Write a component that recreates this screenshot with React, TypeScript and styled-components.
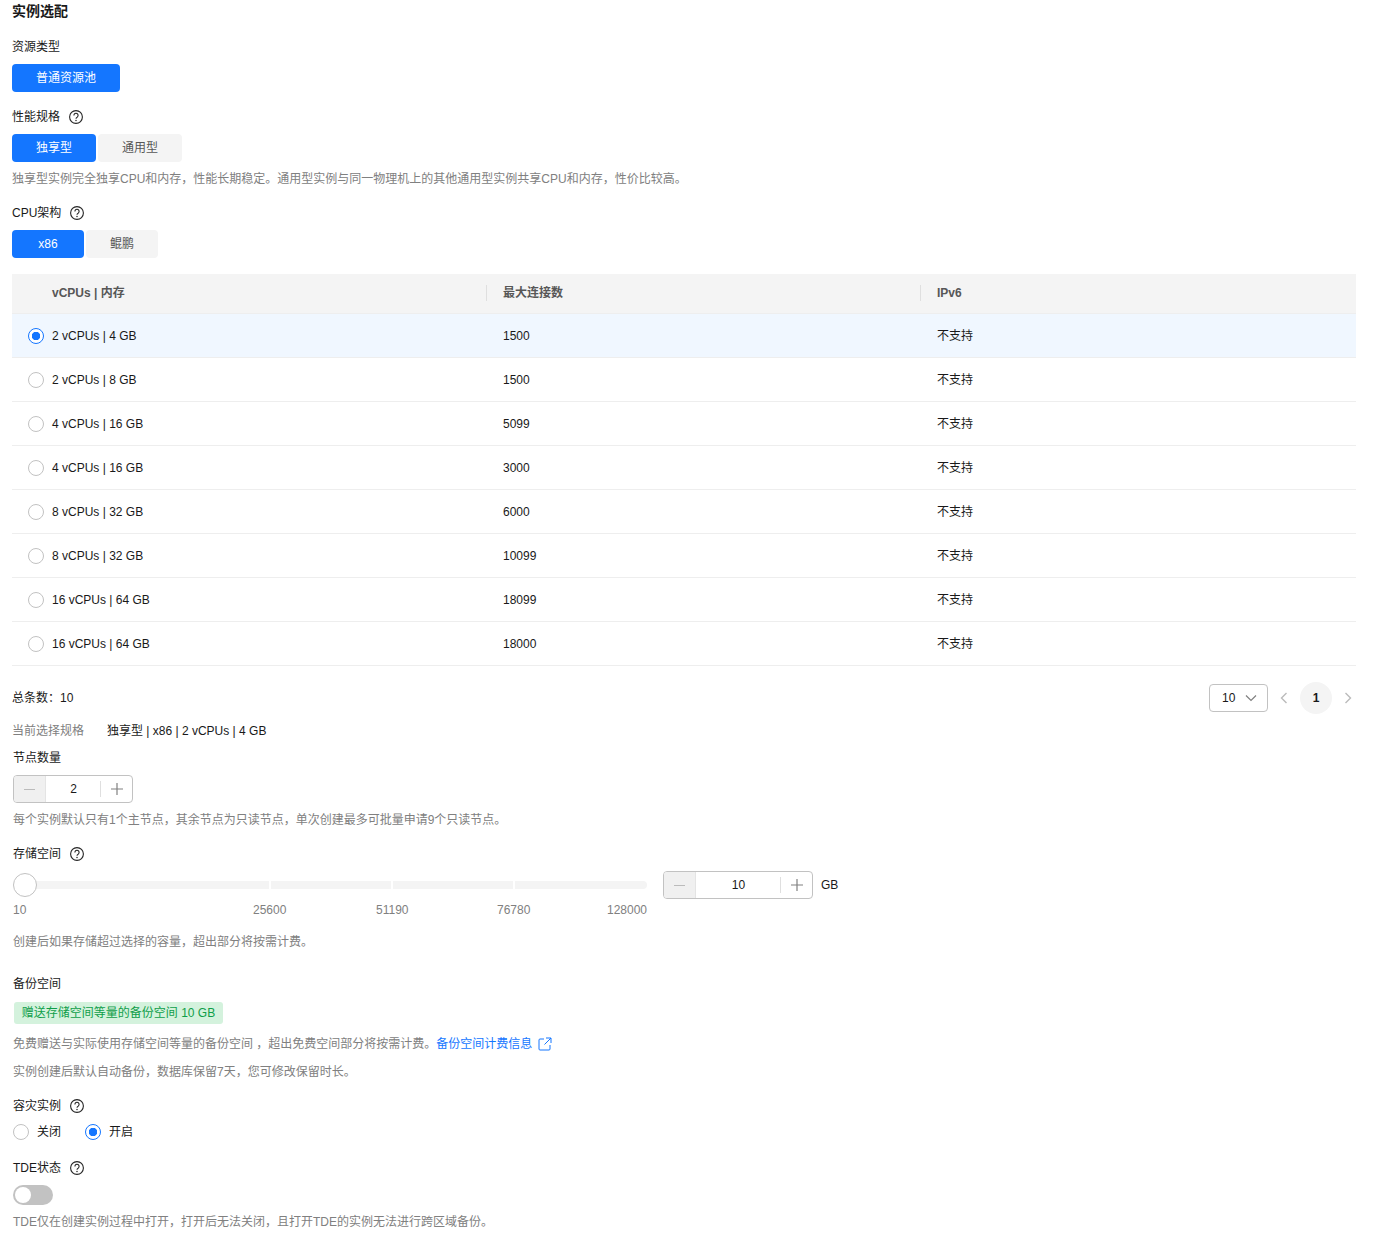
import React from 'react';
import styled, { createGlobalStyle } from 'styled-components';

const GlobalStyle = createGlobalStyle`
  html, body {
    margin: 0;
    padding: 0;
    background: #fff;
  }
  body {
    font-family: 'Liberation Sans', 'Noto Sans CJK SC', sans-serif;
    font-size: 12px;
    color: #191919;
  }
`;

const rows = [
  { spec: '2 vCPUs | 4 GB', conn: '1500' },
  { spec: '2 vCPUs | 8 GB', conn: '1500' },
  { spec: '4 vCPUs | 16 GB', conn: '5099' },
  { spec: '4 vCPUs | 16 GB', conn: '3000' },
  { spec: '8 vCPUs | 32 GB', conn: '6000' },
  { spec: '8 vCPUs | 32 GB', conn: '10099' },
  { spec: '16 vCPUs | 64 GB', conn: '18099' },
  { spec: '16 vCPUs | 64 GB', conn: '18000' },
];

function HelpIcon() {
  return (
    <HelpSvg viewBox="0 0 14 14" fill="none">
      <circle cx="7" cy="7" r="6.4" stroke="#252525" strokeWidth="1.1" />
      <path d="M4.9 5.4a2.1 2.1 0 1 1 3.2 1.8c-.7.4-1.1.8-1.1 1.6" stroke="#252525" strokeWidth="1.1" />
      <circle cx="7" cy="10.5" r=".75" fill="#252525" />
    </HelpSvg>
  );
}

function Stepper({ value, width, inputWidth }: { value: string; width: number; inputWidth: number }) {
  return (
    <StepperBox $width={width}>
      <StepMinus>
        <svg width="11" height="11" viewBox="0 0 11 11">
          <path d="M0 5.5h11" stroke="#bbb" strokeWidth="1.2" />
        </svg>
      </StepMinus>
      <StepValue $width={inputWidth}>{value}</StepValue>
      <StepPlus>
        <svg width="12" height="12" viewBox="0 0 12 12">
          <path d="M0 6h12M6 0v12" stroke="#808080" strokeWidth="1.2" />
        </svg>
      </StepPlus>
    </StepperBox>
  );
}

export default function App() {
  return (
    <Page>
      <GlobalStyle />
      <Title>实例选配</Title>

      <Label $top={18}>资源类型</Label>
      <ButtonRow>
        <Choice $active $width={108}>普通资源池</Choice>
      </ButtonRow>

      <Label $top={16}>
        性能规格
        <HelpIcon />
      </Label>
      <ButtonRow>
        <Choice $active $width={84}>独享型</Choice>
        <Choice $width={84}>通用型</Choice>
      </ButtonRow>
      <Hint $top={8}>独享型实例完全独享CPU和内存，性能长期稳定。通用型实例与同一物理机上的其他通用型实例共享CPU和内存，性价比较高。</Hint>

      <Label $top={16}>
        CPU架构
        <HelpIcon />
      </Label>
      <ButtonRow>
        <Choice $active $width={72}>x86</Choice>
        <Choice $width={72}>鲲鹏</Choice>
      </ButtonRow>

      <Table>
        <HeadRow>
          <HeadCell $first>vCPUs | 内存</HeadCell>
          <HeadCell $divider>最大连接数</HeadCell>
          <HeadCell $divider>IPv6</HeadCell>
        </HeadRow>
        {rows.map((row, i) => (
          <BodyRow key={i} $selected={i === 0}>
            <SpecCell>
              <Radio $checked={i === 0} />
              {row.spec}
            </SpecCell>
            <BodyCell>{row.conn}</BodyCell>
            <BodyCell>不支持</BodyCell>
          </BodyRow>
        ))}
      </Table>

      <Footer>
        <span>总条数：10</span>
        <Pager>
          <PageSelect>
            10
            <svg width="12" height="12" viewBox="0 0 12 12" fill="none">
              <path d="M1 3.5l5 5 5-5" stroke="#808080" strokeWidth="1.2" />
            </svg>
          </PageSelect>
          <PageArrow>
            <svg width="8" height="12" viewBox="0 0 8 12" fill="none">
              <path d="M6.5 1L1.5 6l5 5" stroke="#bbb" strokeWidth="1.4" />
            </svg>
          </PageArrow>
          <PageCurrent>1</PageCurrent>
          <PageArrow>
            <svg width="8" height="12" viewBox="0 0 8 12" fill="none">
              <path d="M1.5 1l5 5-5 5" stroke="#bbb" strokeWidth="1.4" />
            </svg>
          </PageArrow>
        </Pager>
      </Footer>

      <Current>
        <CurrentKey>当前选择规格</CurrentKey>
        独享型 | x86 | 2 vCPUs | 4 GB
      </Current>

      <FormBlock>
        <Label $top={9}>节点数量</Label>
        <Stepper value="2" width={120} inputWidth={55} />
        <Hint $top={8}>每个实例默认只有1个主节点，其余节点为只读节点，单次创建最多可批量申请9个只读节点。</Hint>

        <Label $top={16}>
          存储空间
          <HelpIcon />
        </Label>
        <StorageRow>
          <SliderBlock>
            <Track>
              <Segment $width={256} />
              <Segment $width={120} />
              <Segment $width={120} />
              <Segment $width={132} />
              <Thumb />
            </Track>
            <Marks>
              <span>10</span>
              <MarkAt $left={240}>25600</MarkAt>
              <MarkAt $left={363}>51190</MarkAt>
              <MarkAt $left={484}>76780</MarkAt>
              <span>128000</span>
            </Marks>
          </SliderBlock>
          <Stepper value="10" width={150} inputWidth={85} />
          <Unit>GB</Unit>
        </StorageRow>
        <Hint $top={14}>创建后如果存储超过选择的容量，超出部分将按需计费。</Hint>

        <Label $top={24}>备份空间</Label>
        <GiftTag>赠送存储空间等量的备份空间 10 GB</GiftTag>
        <Hint $top={11}>
          免费赠送与实际使用存储空间等量的备份空间 ，超出免费空间部分将按需计费。
          <DocLink>
            备份空间计费信息
            <svg width="14" height="14" viewBox="0 0 14 14" fill="none">
              <path d="M6 2H2a1 1 0 0 0-1 1v9a1 1 0 0 0 1 1h9a1 1 0 0 0 1-1V8M8 1h5v5M13 1L6.5 7.5" stroke="#1476ff" strokeWidth="1" />
            </svg>
          </DocLink>
        </Hint>
        <Hint $top={10}>实例创建后默认自动备份，数据库保留7天，您可修改保留时长。</Hint>

        <Label $top={16}>
          容灾实例
          <HelpIcon />
        </Label>
        <RadioGroup>
          <RadioOption>
            <Radio />
            关闭
          </RadioOption>
          <RadioOption>
            <Radio $checked />
            开启
          </RadioOption>
        </RadioGroup>

        <Label $top={18}>
          TDE状态
          <HelpIcon />
        </Label>
        <Switch />
        <Hint $top={8}>TDE仅在创建实例过程中打开，打开后无法关闭，且打开TDE的实例无法进行跨区域备份。</Hint>
      </FormBlock>
    </Page>
  );
}

const Page = styled.div`
  width: 1344px;
  height: 1242px;
  padding: 0 0 0 12px;
  overflow: hidden;
  line-height: 18px;
`;

const Title = styled.div`
  padding-top: 3px;
  font-size: 14px;
  line-height: 17px;
  font-weight: 700;
  color: #191919;
`;

const Label = styled.div<{ $top: number }>`
  display: flex;
  align-items: center;
  height: 18px;
  margin-top: ${(p) => p.$top}px;
  margin-bottom: 8px;
  color: #191919;
`;

const HelpSvg = styled.svg`
  width: 14px;
  height: 14px;
  margin-left: 9px;
`;

const ButtonRow = styled.div`
  display: flex;
  gap: 2px;
`;

const Choice = styled.div<{ $active?: boolean; $width: number }>`
  width: ${(p) => p.$width}px;
  height: 28px;
  display: flex;
  align-items: center;
  justify-content: center;
  border-radius: 4px;
  background: ${(p) => (p.$active ? '#1476ff' : '#f4f4f4')};
  color: ${(p) => (p.$active ? '#fff' : '#575757')};
`;

const Hint = styled.div<{ $top: number }>`
  display: flex;
  align-items: center;
  height: 18px;
  margin-top: ${(p) => p.$top}px;
  color: #808080;
`;

const Table = styled.div`
  margin-top: 16px;
`;

const HeadRow = styled.div`
  display: grid;
  grid-template-columns: 474px 434px 1fr;
  height: 40px;
  padding-bottom: 2px;
  align-items: center;
  background: #f4f4f4;
  border-bottom: 1px solid #eee;
  box-sizing: border-box;
`;

const HeadCell = styled.div<{ $first?: boolean; $divider?: boolean }>`
  height: 16px;
  display: flex;
  align-items: center;
  font-weight: 700;
  color: #575757;
  padding-left: ${(p) => (p.$first ? '40px' : '16px')};
  border-left: ${(p) => (p.$divider ? '1px solid #dfdfdf' : 'none')};
`;

const BodyRow = styled.div<{ $selected?: boolean }>`
  display: grid;
  grid-template-columns: 475px 434px 1fr;
  height: 44px;
  align-items: center;
  box-sizing: border-box;
  border-bottom: 1px solid #eee;
  background: ${(p) => (p.$selected ? '#f0f7ff' : '#fff')};
`;

const BodyCell = styled.div`
  padding-left: 16px;
  color: #191919;
`;

const SpecCell = styled.div`
  display: flex;
  align-items: center;
  gap: 8px;
  padding-left: 16px;
  color: #191919;
`;

const Radio = styled.span<{ $checked?: boolean }>`
  display: inline-block;
  box-sizing: border-box;
  width: 16px;
  height: 16px;
  flex: none;
  border-radius: 50%;
  border: 1px solid ${(p) => (p.$checked ? '#1476ff' : '#c2c2c2')};
  background: ${(p) => (p.$checked ? 'radial-gradient(circle, #1476ff 0 4px, #fff 4.5px)' : '#fff')};
`;

const Footer = styled.div`
  display: flex;
  align-items: center;
  justify-content: space-between;
  height: 32px;
  margin-top: 16px;
`;

const Pager = styled.div`
  display: flex;
  align-items: center;
  margin-right: -8px;
`;

const PageSelect = styled.div`
  box-sizing: border-box;
  width: 59px;
  height: 28px;
  display: flex;
  align-items: center;
  justify-content: space-between;
  padding: 0 10px 0 12px;
  border: 1px solid #c2c2c2;
  border-radius: 4px;
`;

const PageArrow = styled.div`
  width: 32px;
  display: flex;
  justify-content: center;
`;

const PageCurrent = styled.div`
  width: 32px;
  height: 32px;
  display: flex;
  align-items: center;
  justify-content: center;
  border-radius: 50%;
  background: #f4f4f4;
  font-weight: 700;
`;

const Current = styled.div`
  display: flex;
  margin-top: 8px;
  height: 18px;
  align-items: center;
  white-space: pre;
`;

const CurrentKey = styled.span`
  width: 95px;
  color: #808080;
`;

const FormBlock = styled.div`
  padding-left: 1px;
`;

const StepperBox = styled.div<{ $width: number }>`
  box-sizing: border-box;
  width: ${(p) => p.$width}px;
  height: 28px;
  display: flex;
  align-items: stretch;
  border: 1px solid #c2c2c2;
  border-radius: 4px;
  overflow: hidden;
`;

const StepMinus = styled.div`
  box-sizing: border-box;
  width: 32px;
  display: flex;
  align-items: center;
  justify-content: center;
  background: #f0f0f0;
  border-right: 1px solid #e4e4e4;
`;

const StepValue = styled.div<{ $width: number }>`
  width: ${(p) => p.$width}px;
  display: flex;
  align-items: center;
  justify-content: center;
  position: relative;
  &::after {
    content: '';
    position: absolute;
    right: 0;
    top: 5px;
    bottom: 5px;
    width: 1px;
    background: #dfdfdf;
  }
`;

const StepPlus = styled.div`
  flex: 1;
  display: flex;
  align-items: center;
  justify-content: center;
`;

const StorageRow = styled.div`
  display: flex;
  align-items: flex-start;
`;

const SliderBlock = styled.div`
  width: 634px;
  margin-right: 16px;
`;

const Track = styled.div`
  position: relative;
  height: 8px;
  margin-top: 10px;
  display: flex;
  gap: 2px;
  overflow: visible;
`;

const Segment = styled.div<{ $width: number }>`
  width: ${(p) => p.$width}px;
  background: #f4f4f4;
  &:first-child {
    border-radius: 4px 0 0 4px;
  }
  &:nth-child(4) {
    border-radius: 0 4px 4px 0;
  }
`;

const Thumb = styled.div`
  position: absolute;
  left: 0;
  top: -8px;
  box-sizing: border-box;
  width: 24px;
  height: 24px;
  border-radius: 50%;
  background: #fff;
  border: 1px solid #c2c2c2;
`;

const Marks = styled.div`
  position: relative;
  display: flex;
  justify-content: space-between;
  margin-top: 12px;
  color: #808080;
`;

const MarkAt = styled.span<{ $left: number }>`
  position: absolute;
  left: ${(p) => p.$left}px;
`;

const Unit = styled.div`
  margin-left: 8px;
  height: 28px;
  display: flex;
  align-items: center;
  color: #191919;
`;

const GiftTag = styled.div`
  width: 209px;
  box-sizing: border-box;
  height: 22px;
  display: flex;
  align-items: center;
  justify-content: center;
  margin-left: 1px;
  margin-top: 9px;
  border-radius: 3px;
  background: #d4f2dd;
  color: #0e9e49;
  white-space: nowrap;
`;

const DocLink = styled.span`
  display: inline-flex;
  align-items: center;
  gap: 6px;
  color: #1476ff;
`;

const RadioGroup = styled.div`
  display: flex;
  gap: 24px;
  height: 18px;
  align-items: center;
`;

const RadioOption = styled.label`
  display: flex;
  align-items: center;
  gap: 8px;
  color: #191919;
`;

const Switch = styled.div`
  position: relative;
  width: 40px;
  height: 20px;
  border-radius: 10px;
  background: #c2c2c2;
  &::after {
    content: '';
    position: absolute;
    left: 2px;
    top: 2px;
    width: 16px;
    height: 16px;
    border-radius: 50%;
    background: #fff;
  }
`;
